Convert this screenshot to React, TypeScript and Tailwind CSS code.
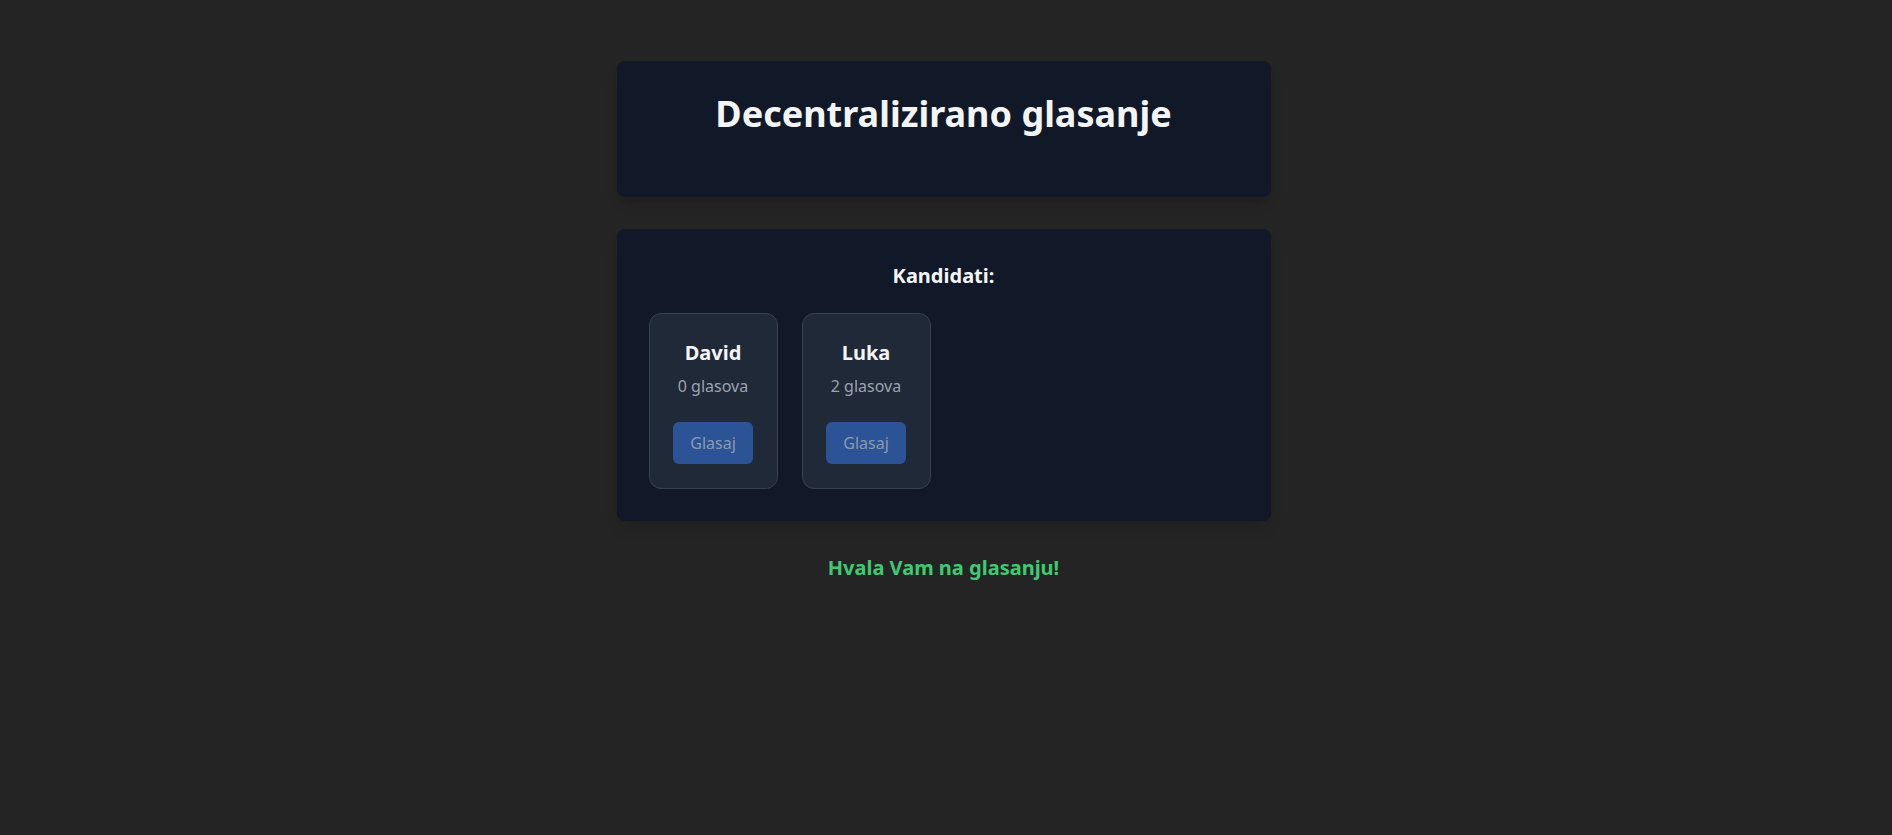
export default function App() {
  const candidates = [
    { name: "David", votes: 0 },
    { name: "Luka", votes: 2 },
  ]

  return (
    <div className="min-h-screen bg-[#242424] pt-[61px] pr-[5px] font-['Noto_Sans',sans-serif]">
      <div className="w-[654px] mx-auto">
        <div className="bg-[#111827] rounded-lg shadow-lg px-8 pt-[33px] pb-[31px]">
          <h1 className="text-4xl font-bold text-[#f3f4f6] text-center mb-8">Decentralizirano glasanje</h1>
        </div>

        <div className="bg-[#111827] rounded-lg shadow-lg px-8 pt-[33px] pb-8 mt-8">
          <h2 className="text-xl font-bold text-[#f3f4f6] text-center mb-[23px]">Kandidati:</h2>
          <div className="flex gap-6">
            {candidates.map((c) => (
              <div
                key={c.name}
                className="w-[129px] bg-[#1f2937] border border-[#374151] rounded-xl px-6 pt-[25px] pb-6 flex flex-col items-center"
              >
                <h3 className="text-xl font-bold text-[#f3f4f6] mb-[7px]">{c.name}</h3>
                <p className="text-base text-[#9ca3af]">{c.votes} glasova</p>
                <button
                  disabled
                  className="mt-6 px-[17px] py-[9px] bg-[#2c5395] text-[#8b9ab0] rounded-md text-base"
                >
                  Glasaj
                </button>
              </div>
            ))}
          </div>
        </div>

        <p className="mt-[33px] text-xl font-bold text-[#40c972] text-center">Hvala Vam na glasanju!</p>
      </div>
    </div>
  )
}
